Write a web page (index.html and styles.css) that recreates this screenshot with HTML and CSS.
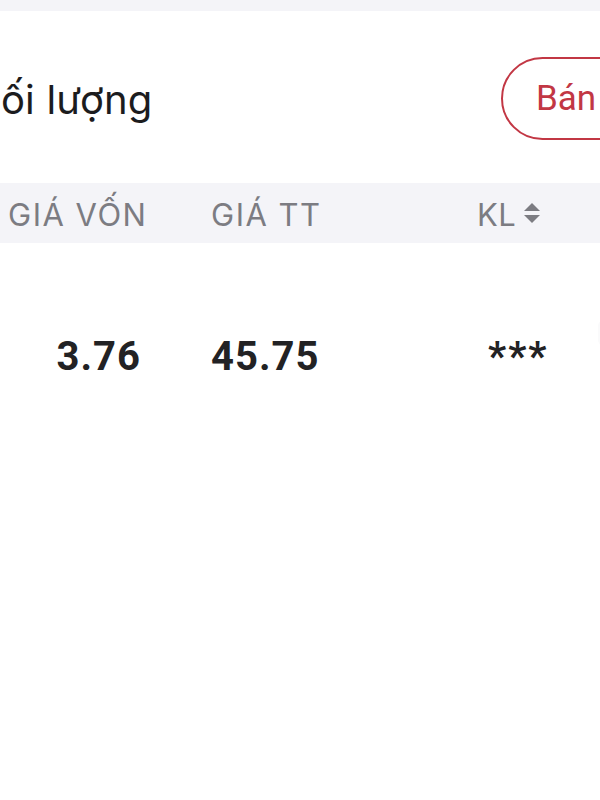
FILE: index.html
```html
<!DOCTYPE html>
<html lang="vi">
<head>
<meta charset="utf-8">
<meta name="viewport" content="width=device-width, initial-scale=1">
<title>Danh mục</title>
<link rel="stylesheet" href="styles.css">
</head>
<body>
<div class="screen">
    <div class="topbar"></div>

    <div class="toolbar">
        <div class="title">Khối lượng</div>
        <button class="sell" type="button">Bán</button>
    </div>

    <div class="grid head">
        <div class="col">GIÁ VỐN</div>
        <div class="col">GIÁ TT</div>
        <div class="col sortable">
            KL
            <svg class="sort" width="16" height="20" viewBox="0 0 16 20">
                <path d="M8 0 L16 8 L0 8 Z" fill="#7c7c82"/>
                <path d="M0 12 L16 12 L8 20 Z" fill="#7c7c82"/>
            </svg>
        </div>
        <div></div>
    </div>

    <div class="grid row">
        <div class="cell cost">3.76</div>
        <div class="cell">45.75</div>
        <div class="cell qty">***</div>
        <div class="cell"><span class="more"></span></div>
    </div>
</div>
</body>
</html>
```

FILE: styles.css
```css
html, body {
    margin: 0;
    padding: 0;
    background: #ffffff;
}

body {
    font-family: Inter, Roboto, "Noto Sans", sans-serif;
    color: #1c1c1e;
    overflow: hidden;
}

.screen {
    width: 600px;
    height: 800px;
    overflow: hidden;
}

.topbar {
    height: 11px;
    background: #f4f4f8;
}

/* title + sell button */
.toolbar {
    height: 172px;
    display: flex;
    align-items: center;
    justify-content: space-between;
}

.title {
    margin-left: -50px;
    margin-top: 4px;
    font-size: 40px;
    font-weight: 400;
    letter-spacing: 0.2px;
    color: #1c1c1e;
    white-space: nowrap;
}

.sell {
    flex: none;
    width: 150px;
    height: 83px;
    margin-right: -51px;
    margin-top: 2px;
    padding: 0 0 0 33px;
    border: 2px solid #c23744;
    border-radius: 42px;
    background: #ffffff;
    color: #c23744;
    font-family: Roboto, "Noto Sans", sans-serif;
    font-size: 35px;
    text-align: left;
}

/* table */
.grid {
    display: grid;
    grid-template-columns: 203px 266px 1fr 8px;
    padding-left: 8px;
}

.head {
    height: 60px;
    background: #f4f4f8;
    font-size: 31px;
    line-height: 60px;
    letter-spacing: 1.5px;
    color: #7c7c82;
    padding-top: 2px;
    box-sizing: border-box;
}

.sortable {
    display: flex;
    align-items: center;
    gap: 8px;
    letter-spacing: 0.3px;
}

.sort {
    margin-top: -4px;
}

.row {
    padding-top: 90px;
    font-family: Roboto, "Noto Sans", sans-serif;
    font-size: 40px;
    font-weight: 700;
    line-height: 48px;
    letter-spacing: 1px;
    color: #222224;
}

.cell {
    white-space: nowrap;
}

.cost {
    text-align: right;
    padding-right: 70px;
}

.qty {
    padding-left: 11px;
    letter-spacing: 2px;
}

.more {
    display: block;
    width: 24px;
    height: 26px;
    margin-top: -13px;
    margin-left: 6px;
    border-radius: 6px;
    background: #fafafb;
}
```
